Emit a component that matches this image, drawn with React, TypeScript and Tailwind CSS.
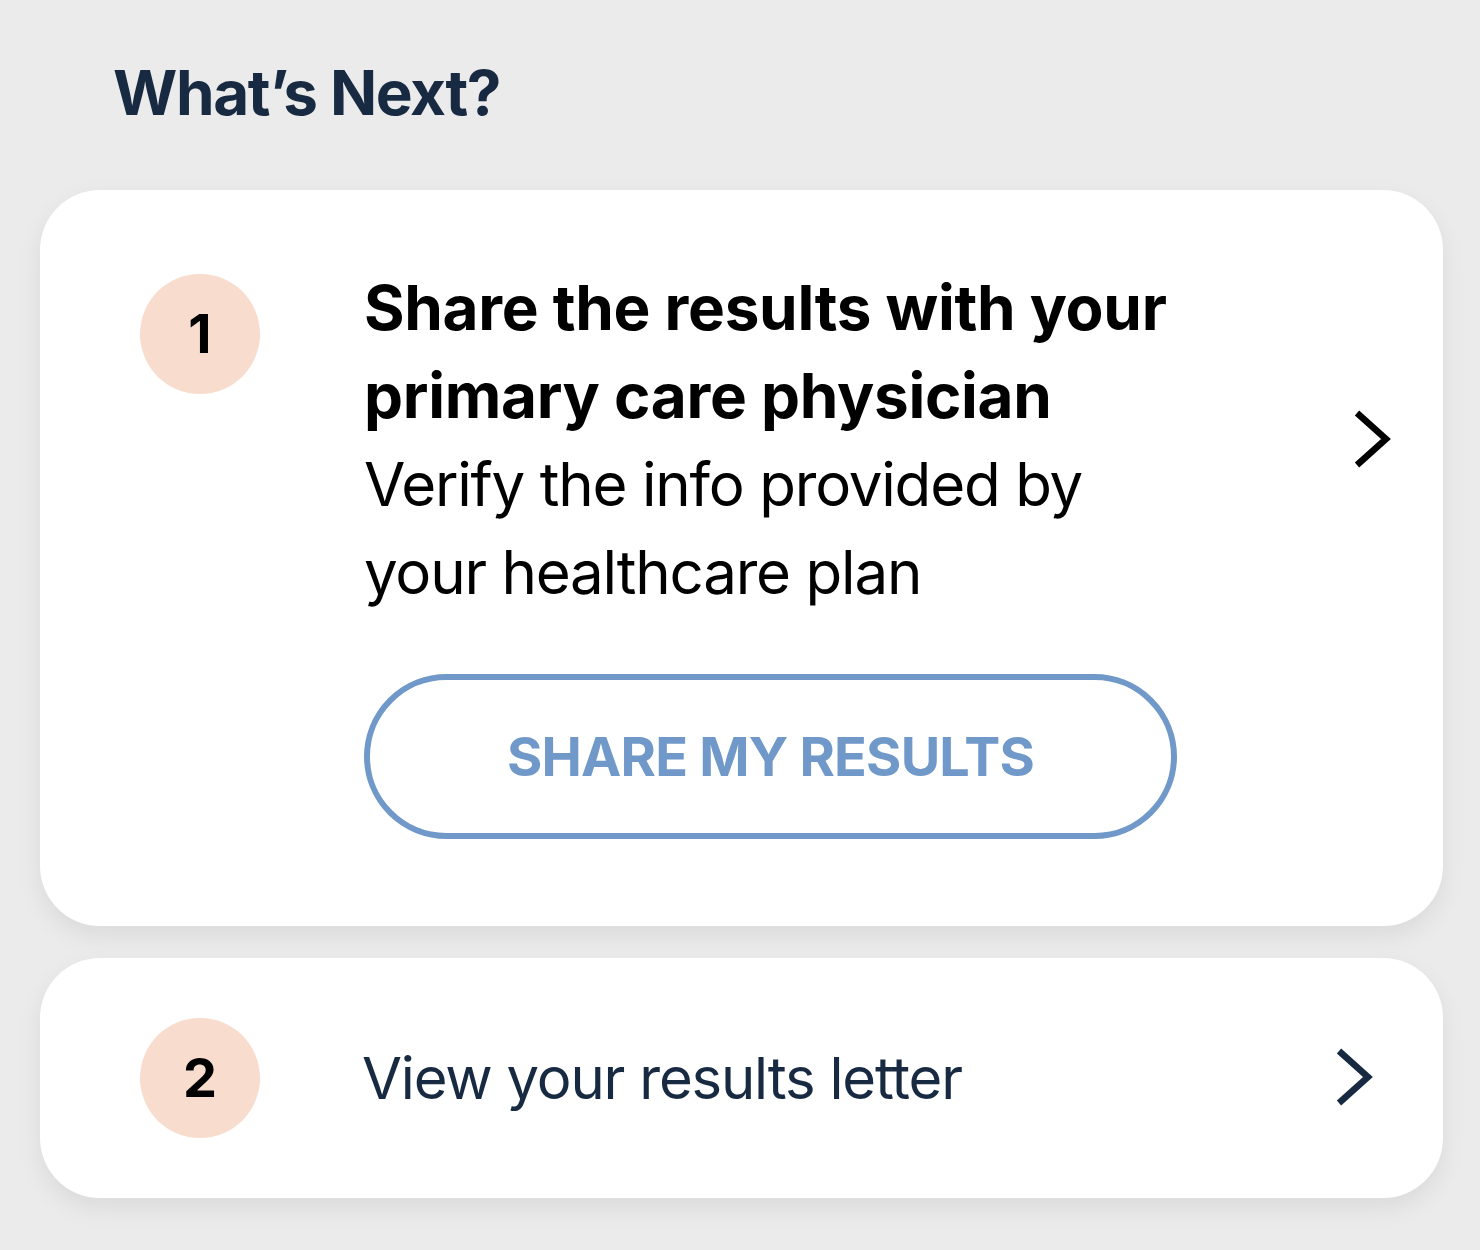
import React from 'react'

const FONT = { fontFamily: 'Inter, "Noto Sans", "Liberation Sans", sans-serif' }

function Chevron({ className }: { className: string }) {
  return (
    <svg viewBox="0 0 40 60" className={className} fill="none" aria-hidden>
      <polyline points="4,3 33,29 4,55" stroke="currentColor" strokeWidth="6.5" strokeLinejoin="miter" />
    </svg>
  )
}

function StepBadge({ n }: { n: number }) {
  return (
    <div className="flex h-[120px] w-[120px] shrink-0 items-center justify-center rounded-full bg-[#f8dccd] text-[54px] font-bold leading-none text-black">
      {n}
    </div>
  )
}

export default function App() {
  return (
    <div className="min-h-screen bg-[#ebebeb] pb-12 pl-10 pr-[37px] pt-[56px]" style={FONT}>
      <h1 className="pl-[73px] text-[62px] font-bold leading-[74px] tracking-[-1.4px] text-[#172a41]">What’s Next?</h1>

      <div className="mt-[60px] flex flex-col gap-[32px]">
        {/* step 1 — share with PCP */}
        <div className="flex items-start rounded-[60px] bg-white pb-[87px] pl-[100px] pr-[50px] pt-[74px] shadow-[0_10px_24px_rgba(0,0,0,0.07)]">
          <div className="mt-[10px]">
            <StepBadge n={1} />
          </div>
          <div className="ml-[104px] flex flex-1 flex-col">
            <div className="flex items-center justify-between">
              <div className="w-[830px] leading-[88px] text-black">
                <p className="text-[62px] font-bold tracking-[-0.3px]">Share the results with your primary care physician</p>
                <p className="text-[60px] font-normal tracking-[-1.2px]">Verify the info provided by your healthcare plan</p>
              </div>
              <Chevron className="h-[60px] w-[40px] text-black" />
            </div>
            <button className="mt-[58px] h-[165px] w-[813px] rounded-full border-[6px] border-[#7099c9] text-[54px] font-bold uppercase tracking-[-0.8px] text-[#7099c9]">
              Share my results
            </button>
          </div>
        </div>

        {/* step 2 — results letter */}
        <div className="flex items-center rounded-[60px] bg-white py-[60px] pl-[100px] pr-[68px] shadow-[0_10px_24px_rgba(0,0,0,0.07)]">
          <StepBadge n={2} />
          <p className="ml-[102px] flex-1 text-[58px] leading-[88px] tracking-[-1.2px] text-[#172a41]">View your results letter</p>
          <Chevron className="h-[60px] w-[40px] text-[#172a41]" />
        </div>
      </div>
    </div>
  )
}
